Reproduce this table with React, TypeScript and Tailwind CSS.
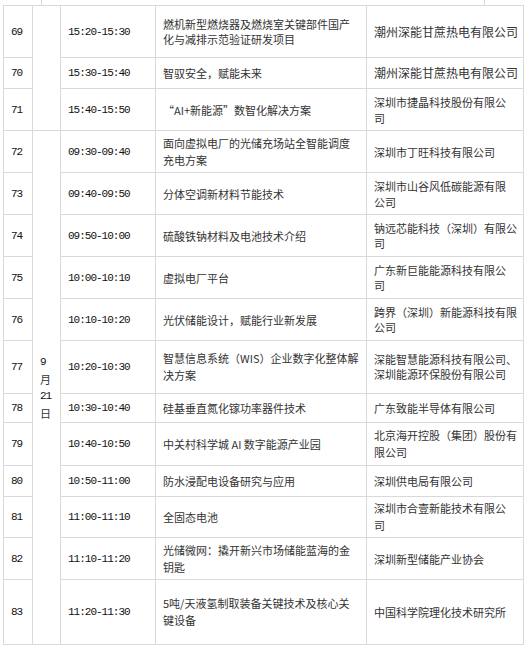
import React from "react";

type Row = {
  n: string;
  t: string;
  topic: string[];
  tl?: string;
  co: string[];
  cl?: string;
  cs?: string;
};

const rows: Row[] = [
  { n: "69", t: "15:20-15:30", topic: ["燃机新型燃烧器及燃烧室关键部件国产", "化与减排示范验证研发项目"], tl: "leading-[15px]", co: ["潮州深能甘蔗热电有限公司"], cs: "text-[12px]" },
  { n: "70", t: "15:30-15:40", topic: ["智驭安全，赋能未来"], co: ["潮州深能甘蔗热电有限公司"], cs: "text-[12px]" },
  { n: "71", t: "15:40-15:50", topic: ["“AI+新能源”数智化解决方案"], co: ["深圳市捷晶科技股份有限公", "司"] },
  { n: "72", t: "09:30-09:40", topic: ["面向虚拟电厂的光储充场站全智能调度", "充电方案"], tl: "leading-[17px]", co: ["深圳市丁旺科技有限公司"] },
  { n: "73", t: "09:40-09:50", topic: ["分体空调新材料节能技术"], co: ["深圳市山谷风低碳能源有限", "公司"] },
  { n: "74", t: "09:50-10:00", topic: ["硫酸铁钠材料及电池技术介绍"], co: ["钠远芯能科技（深圳）有限公", "司"], cl: "leading-[15px]" },
  { n: "75", t: "10:00-10:10", topic: ["虚拟电厂平台"], co: ["广东新巨能能源科技有限公", "司"], cl: "leading-[15px]" },
  { n: "76", t: "10:10-10:20", topic: ["光伏储能设计，赋能行业新发展"], co: ["跨界（深圳）新能源科技有限", "公司"], cl: "leading-[15px]" },
  { n: "77", t: "10:20-10:30", topic: ["智慧信息系统（WIS）企业数字化整体解", "决方案"], tl: "leading-[17px]", co: ["深能智慧能源科技有限公司、", "深圳能源环保股份有限公司"], cl: "leading-[15px]" },
  { n: "78", t: "10:30-10:40", topic: ["硅基垂直氮化镓功率器件技术"], co: ["广东致能半导体有限公司"] },
  { n: "79", t: "10:40-10:50", topic: ["中关村科学城 AI 数字能源产业园"], co: ["北京海开控股（集团）股份有", "限公司"], cl: "leading-[17px]" },
  { n: "80", t: "10:50-11:00", topic: ["防水浸配电设备研究与应用"], co: ["深圳供电局有限公司"] },
  { n: "81", t: "11:00-11:10", topic: ["全固态电池"], co: ["深圳市合壹新能技术有限公", "司"], cl: "leading-[17px]" },
  { n: "82", t: "11:10-11:20", topic: ["光储微网：撬开新兴市场储能蓝海的金", "钥匙"], tl: "leading-[17px]", co: ["深圳新型储能产业协会"] },
  { n: "83", t: "11:20-11:30", topic: ["5吨/天液氢制取装备关键技术及核心关", "键设备"], tl: "leading-[17px]", co: ["中国科学院理化技术研究所"] },
];

const cell =
  "flex items-center border-r border-b border-[#d9d9d9] pl-[7px] pr-[2px] overflow-hidden";
const cjk = "font-['Noto_Sans_CJK_SC',sans-serif]";
const mono = "font-['Liberation_Mono',monospace] tracking-[-1px] text-[#111]";

function Lines({ lines }: { lines: string[] }) {
  return (
    <div className="whitespace-nowrap">
      {lines.map((l, i) => (
        <div key={i}>{l}</div>
      ))}
    </div>
  );
}

export default function App() {
  return (
    <div className="w-[528px] h-[649px] bg-white text-[#333] text-[11px] leading-[16px]">
      <div className="ml-[41px] w-[444px] h-[5px] border-x border-[#d9d9d9]" />
      <div className="ml-[3px] w-[521px] grid grid-cols-[29px_28px_95px_211px_157px] grid-rows-[52px_31px_42px_42px_42px_42px_42px_42px_53px_29px_43px_31px_41px_42px_65px] border-l border-t border-[#d9d9d9]">
        {rows.map((r, i) => (
          <React.Fragment key={r.n}>
            <div className={`${cell} ${mono}`}>{r.n}</div>
            {i === 0 && <div className={`${cell} row-span-3`} />}
            {i === 3 && (
              <div className={`${cell} row-span-12 leading-[17px]`}>
                <div>
                  <div className={mono}>9</div>
                  <div className={cjk}>月</div>
                  <div className={mono}>21</div>
                  <div className={cjk}>日</div>
                </div>
              </div>
            )}
            <div className={`${cell} ${mono}`}>{r.t}</div>
            <div className={`${cell} ${cjk} ${r.tl ?? ""}`}>
              <Lines lines={r.topic} />
            </div>
            <div className={`${cell} ${cjk} ${r.cl ?? ""} ${r.cs ?? ""}`}>
              <Lines lines={r.co} />
            </div>
          </React.Fragment>
        ))}
      </div>
    </div>
  );
}
